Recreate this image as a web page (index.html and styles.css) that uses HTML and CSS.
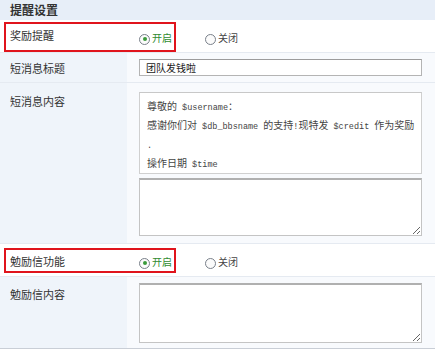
FILE: index.html
```html
<!DOCTYPE html>
<html lang="zh">
<head>
<meta charset="utf-8">
<link rel="stylesheet" href="styles.css">
</head>
<body>
<div class="panel">
  <div class="head">提醒设置</div>

  <div class="row row-radio">
    <div class="label">奖励提醒</div>
    <div class="value radios">
      <span class="radio on"><i></i>开启</span>
      <span class="radio"><i></i>关闭</span>
    </div>
    <div class="mark mark-1"></div>
  </div>

  <div class="row alt row-title">
    <div class="label">短消息标题</div>
    <div class="value"><div class="input">团队发钱啦</div></div>
  </div>

  <div class="row alt row-content">
    <div class="label">短消息内容</div>
    <div class="value stack">
      <div class="box box-msg">
        <div class="line">尊敬的<span class="m"> $username</span>：</div>
        <div class="line">感谢你们对<span class="m"> $db_bbsname </span>的支持<span class="m">!</span>现特发<span class="m"> $credit </span>作为奖励</div>
        <div class="line"><span class="m">.</span></div>
        <div class="line">操作日期<span class="m"> $time</span></div>
      </div>
      <textarea class="box box-2"></textarea>
    </div>
  </div>

  <div class="row row-radio row-4">
    <div class="label">勉励信功能</div>
    <div class="value radios">
      <span class="radio on"><i></i>开启</span>
      <span class="radio"><i></i>关闭</span>
    </div>
    <div class="mark mark-2"></div>
  </div>

  <div class="row alt row-last">
    <div class="label">勉励信内容</div>
    <div class="value"><textarea class="box box-3"></textarea></div>
  </div>
</div>
</body>
</html>
```
FILE: styles.css
```css
html, body {
  margin: 0;
  padding: 0;
  background: #ffffff;
}
body {
  font-family: "Noto Sans CJK SC", "Noto Sans", sans-serif;
  color: #333;
  font-size: 11px;
}
.panel {
  width: 435px;
  height: 350px;
  overflow: hidden;
}
.head {
  height: 20px;
  line-height: 19px;
  background: #e7eef8;
  font-weight: bold;
  font-size: 12px;
  padding-left: 10px;
  color: #333;
}
.row {
  position: relative;
  display: grid;
  grid-template-columns: 127px 1fr;
  border-bottom: 1px solid #e5eaf1;
  background: #fff;
}
.row.alt .label {
  background: #eff4fa;
}
.row.alt .value {
  background: #f8fafd;
}
.label {
  padding-left: 10px;
  line-height: 16px;
}
.value {
  padding-left: 12px;
  padding-right: 13px;
}
.row-radio {
  height: 32px;
}
.row-radio .label {
  padding-top: 7px;
}
.radios {
  display: flex;
  align-items: flex-start;
  padding-top: 11px;
}
.row-4 .label { padding-top: 9px; }
.row-4 .radios { padding-top: 11px; }
.radio {
  display: flex;
  align-items: center;
  font-size: 10px;
  line-height: 14px;
  color: #444;
  margin-right: 33px;
}
.radio i {
  display: block;
  width: 9px;
  height: 9px;
  border: 1px solid #79808a;
  border-radius: 50%;
  margin-right: 2px;
  margin-top: 2px;
  background: #fbfbfb;
  position: relative;
}
.radio.on {
  color: #2f8a2f;
}
.radio.on i::after {
  content: "";
  position: absolute;
  left: 2.5px;
  top: 2.5px;
  width: 4px;
  height: 4px;
  border-radius: 50%;
  background: #3a9a3a;
}
.mark {
  position: absolute;
  left: 4px;
  width: 168px;
  border: 2px solid #e0141c;
}
.mark-1 { top: 2px; height: 26px; }
.mark-2 { top: 4px; height: 21px; }

.row-title {
  height: 29px;
}
.row-title .label {
  padding-top: 7px;
}
.row-title .value {
  padding-top: 6px;
}
.input {
  height: 15px;
  border: 1px solid #b4b4b4;
  border-top-color: #9c9c9c;
  background: #fff;
  font-size: 10px;
  line-height: 15px;
  padding-left: 6px;
  color: #222;
}
.row-content {
  height: 160px;
}
.row-content .label {
  padding-top: 10px;
}
.stack {
  padding-top: 9px;
  display: flex;
  flex-direction: column;
  gap: 4px;
}
.box {
  display: block;
  box-sizing: border-box;
  width: 100%;
  border: 1px solid #c4c4c4;
  border-top: 2px solid #b0b0b0;
  background: #fff;
  margin: 0;
  font-family: "Liberation Mono", "Noto Sans CJK SC", monospace;
}
.box-msg {
  height: 82px;
  padding: 3px 0 0 7px;
  font-family: "Noto Sans CJK SC", sans-serif;
  font-size: 10px;
  color: #444;
  border-color: #d0d0d0;
  border-top: 1px solid #c8c8c8;
}
.line {
  line-height: 19px;
  height: 19px;
  white-space: nowrap;
}
.m {
  font-family: "Liberation Mono", monospace;
  font-size: 8.5px;
}
.box-2 {
  height: 58px;
}
.row-last {
  height: 71px;
  border-bottom: 1px solid #c9ced6;
}
.row-last .label {
  padding-top: 9px;
}
.row-last .value {
  padding-top: 6px;
}
.box-3 {
  height: 60px;
}
```
